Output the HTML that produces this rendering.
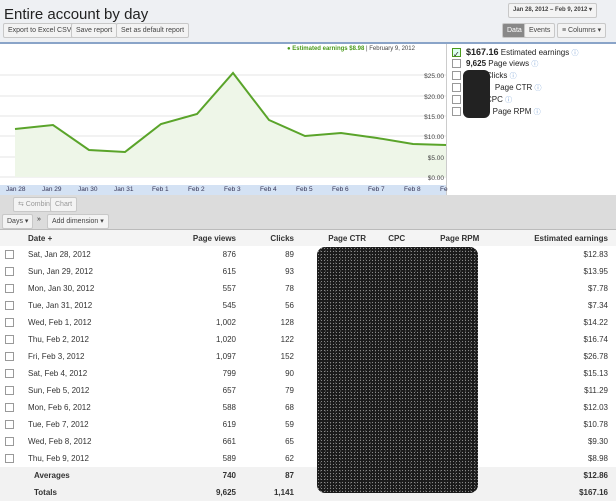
<!DOCTYPE html>
<html><head><style>
body{margin:0;width:616px;height:500px;overflow:hidden;font-family:"Liberation Sans",sans-serif;font-size:8px;color:#222;background:#fff;position:relative}
.a{position:absolute}
.btn{position:absolute;top:23px;height:13px;border:1px solid #c8c8c8;background:#f3f3f3;border-radius:2px;font-size:7px;line-height:13px;padding:0 4px;color:#444;white-space:nowrap}
table{position:absolute;left:0;top:230px;width:616px;border-collapse:collapse;font-size:8px}
td{height:17px;padding:0 8px 0 0;color:#333}
th{height:16px;font-weight:bold;text-align:right;padding:0 8px 0 0;color:#333}
.r{text-align:right}
.cb{display:inline-block;width:7px;height:7px;border:1px solid #999;background:#fff;margin-left:5px;vertical-align:middle}
tr.s td{background:#f2f2f2;font-weight:bold}
.leg div{height:12px;line-height:12px;font-size:8px;white-space:nowrap}
.leg .cb{margin:0 5px 0 0}
.q{color:#7aa3d6;font-size:7px}
</style></head><body>
<div class="a" style="left:0;top:0;width:616px;height:42px;background:#eef0f3"></div>
<div class="a" style="left:4px;top:6px;font-size:15px;color:#222">Entire account by day</div>
<div class="btn" style="left:508px;top:3px;font-size:6px;font-weight:bold">Jan 28, 2012 – Feb 9, 2012 ▾</div>
<div class="btn" style="left:3px">Export to Excel CSV</div>
<div class="btn" style="left:71px">Save report</div>
<div class="btn" style="left:116px">Set as default report</div>
<div class="btn" style="left:502px;background:#888;color:#fff">Data</div>
<div class="btn" style="left:524px">Events</div>
<div class="btn" style="left:557px">≡ Columns ▾</div>
<div class="a" style="left:0;top:42px;width:616px;height:2px;background:#8aa4c8"></div>
<div class="a" style="left:446px;top:44px;width:1px;height:151px;background:#ccc"></div>
<div class="a" style="left:287px;top:46px;font-size:6px;color:#4a9a1a;font-weight:bold">● Estimated earnings $8.98 <span style="color:#444;font-weight:normal">| February 9, 2012</span></div>
<svg class="a" style="left:0;top:55px" width="446" height="130">
<g stroke="#e6e6e6" stroke-width="1">
<line x1="0" y1="20" x2="446" y2="20"/><line x1="0" y1="41" x2="446" y2="41"/><line x1="0" y1="61" x2="446" y2="61"/><line x1="0" y1="81" x2="446" y2="81"/><line x1="0" y1="102" x2="446" y2="102"/><line x1="0" y1="122" x2="446" y2="122"/>
</g>
<polygon points="15,74 53,70 89,95 125,97 161,69 197,59 233,18 269,65 305,81 341,78 377,83 413,89 446,90 446,122 15,122" fill="#eef6e8"/>
<polyline points="15,74 53,70 89,95 125,97 161,69 197,59 233,18 269,65 305,81 341,78 377,83 413,89 446,90" fill="none" stroke="#5aa42a" stroke-width="2"/>
<g font-size="6.5" fill="#444" text-anchor="end" font-family="Liberation Sans">
<text x="444" y="23">$25.00</text><text x="444" y="44">$20.00</text><text x="444" y="64">$15.00</text><text x="444" y="84">$10.00</text><text x="444" y="105">$5.00</text><text x="444" y="125">$0.00</text></g>
</svg>
<div class="a" style="left:0;top:185px;width:446px;height:10px;background:#d4e2f4"></div>
<div class="a" style="left:0;top:185px;width:446px;font-size:6.5px;color:#335;line-height:10px">
<span class="a" style="left:6px">Jan 28</span><span class="a" style="left:42px">Jan 29</span><span class="a" style="left:78px">Jan 30</span><span class="a" style="left:114px">Jan 31</span><span class="a" style="left:152px">Feb 1</span><span class="a" style="left:188px">Feb 2</span><span class="a" style="left:224px">Feb 3</span><span class="a" style="left:260px">Feb 4</span><span class="a" style="left:296px">Feb 5</span><span class="a" style="left:332px">Feb 6</span><span class="a" style="left:368px">Feb 7</span><span class="a" style="left:404px">Feb 8</span><span class="a" style="left:440px">Fe</span></div>
<div class="leg a" style="left:452px;top:46px">
<div><span class="cb" style="border-color:#4a9a1a;background:#dfe">✓</span><b style="font-size:9px">$167.16</b> Estimated earnings <span class="q">ⓘ</span></div>
<div><span class="cb"></span><b>9,625</b> Page views <span class="q">ⓘ</span></div>
<div><span class="cb"></span>&nbsp;&nbsp;&nbsp;&nbsp;&nbsp;&nbsp;&nbsp;&nbsp;&nbsp;Clicks <span class="q">ⓘ</span></div>
<div><span class="cb"></span>&nbsp;&nbsp;&nbsp;&nbsp;&nbsp;&nbsp;&nbsp;&nbsp;&nbsp;&nbsp;&nbsp;&nbsp;&nbsp;Page CTR <span class="q">ⓘ</span></div>
<div><span class="cb"></span>&nbsp;&nbsp;&nbsp;&nbsp;&nbsp;&nbsp;&nbsp;&nbsp;&nbsp;CPC <span class="q">ⓘ</span></div>
<div><span class="cb"></span>&nbsp;&nbsp;&nbsp;&nbsp;&nbsp;&nbsp;&nbsp;&nbsp;&nbsp;&nbsp;&nbsp;&nbsp;Page RPM <span class="q">ⓘ</span></div>
</div>
<div class="a" style="left:463px;top:70px;width:27px;height:48px;background:#222;border-radius:6px"></div>
<div class="a" style="left:0;top:195px;width:616px;height:34px;background:#dcdcdc;border-bottom:1px solid #bbb"></div>
<div class="btn" style="left:13px;top:197px;color:#999">⇆ Combine</div>
<div class="btn" style="left:50px;top:197px;color:#999">Chart</div>
<div class="btn" style="left:2px;top:214px">Days ▾</div>
<div class="a" style="left:37px;top:216px;font-size:7px">»</div>
<div class="btn" style="left:47px;top:214px">Add dimension ▾</div>
<table>
<tr style="background:#f4f4f4"><th style="width:20px"></th><th style="text-align:left;width:140px">Date +</th><th style="width:60px">Page views</th><th style="width:50px">Clicks</th><th>Page CTR</th><th>CPC</th><th>Page RPM</th><th>Estimated earnings</th></tr>
<tr><td><span class="cb"></span></td><td>Sat, Jan 28, 2012</td><td class="r">876</td><td class="r">89</td><td></td><td></td><td></td><td class="r">$12.83</td></tr>
<tr><td><span class="cb"></span></td><td>Sun, Jan 29, 2012</td><td class="r">615</td><td class="r">93</td><td></td><td></td><td></td><td class="r">$13.95</td></tr>
<tr><td><span class="cb"></span></td><td>Mon, Jan 30, 2012</td><td class="r">557</td><td class="r">78</td><td></td><td></td><td></td><td class="r">$7.78</td></tr>
<tr><td><span class="cb"></span></td><td>Tue, Jan 31, 2012</td><td class="r">545</td><td class="r">56</td><td></td><td></td><td></td><td class="r">$7.34</td></tr>
<tr><td><span class="cb"></span></td><td>Wed, Feb 1, 2012</td><td class="r">1,002</td><td class="r">128</td><td></td><td></td><td></td><td class="r">$14.22</td></tr>
<tr><td><span class="cb"></span></td><td>Thu, Feb 2, 2012</td><td class="r">1,020</td><td class="r">122</td><td></td><td></td><td></td><td class="r">$16.74</td></tr>
<tr><td><span class="cb"></span></td><td>Fri, Feb 3, 2012</td><td class="r">1,097</td><td class="r">152</td><td></td><td></td><td></td><td class="r">$26.78</td></tr>
<tr><td><span class="cb"></span></td><td>Sat, Feb 4, 2012</td><td class="r">799</td><td class="r">90</td><td></td><td></td><td></td><td class="r">$15.13</td></tr>
<tr><td><span class="cb"></span></td><td>Sun, Feb 5, 2012</td><td class="r">657</td><td class="r">79</td><td></td><td></td><td></td><td class="r">$11.29</td></tr>
<tr><td><span class="cb"></span></td><td>Mon, Feb 6, 2012</td><td class="r">588</td><td class="r">68</td><td></td><td></td><td></td><td class="r">$12.03</td></tr>
<tr><td><span class="cb"></span></td><td>Tue, Feb 7, 2012</td><td class="r">619</td><td class="r">59</td><td></td><td></td><td></td><td class="r">$10.78</td></tr>
<tr><td><span class="cb"></span></td><td>Wed, Feb 8, 2012</td><td class="r">661</td><td class="r">65</td><td></td><td></td><td></td><td class="r">$9.30</td></tr>
<tr><td><span class="cb"></span></td><td>Thu, Feb 9, 2012</td><td class="r">589</td><td class="r">62</td><td></td><td></td><td></td><td class="r">$8.98</td></tr>
<tr class="s"><td></td><td style="padding-left:6px">Averages</td><td class="r">740</td><td class="r">87</td><td></td><td></td><td></td><td class="r">$12.86</td></tr>
<tr class="s"><td></td><td style="padding-left:6px">Totals</td><td class="r">9,625</td><td class="r">1,141</td><td></td><td></td><td></td><td class="r">$167.16</td></tr>
</table>
<div class="a" style="left:317px;top:247px;width:161px;height:246px;border-radius:8px;background-color:#1a1a1a;background-image:radial-gradient(#888 0.6px,transparent 0.8px),radial-gradient(#666 0.6px,transparent 0.8px);background-size:3px 3px,5px 4px;background-position:0 0,1px 2px"></div>
</body></html>
